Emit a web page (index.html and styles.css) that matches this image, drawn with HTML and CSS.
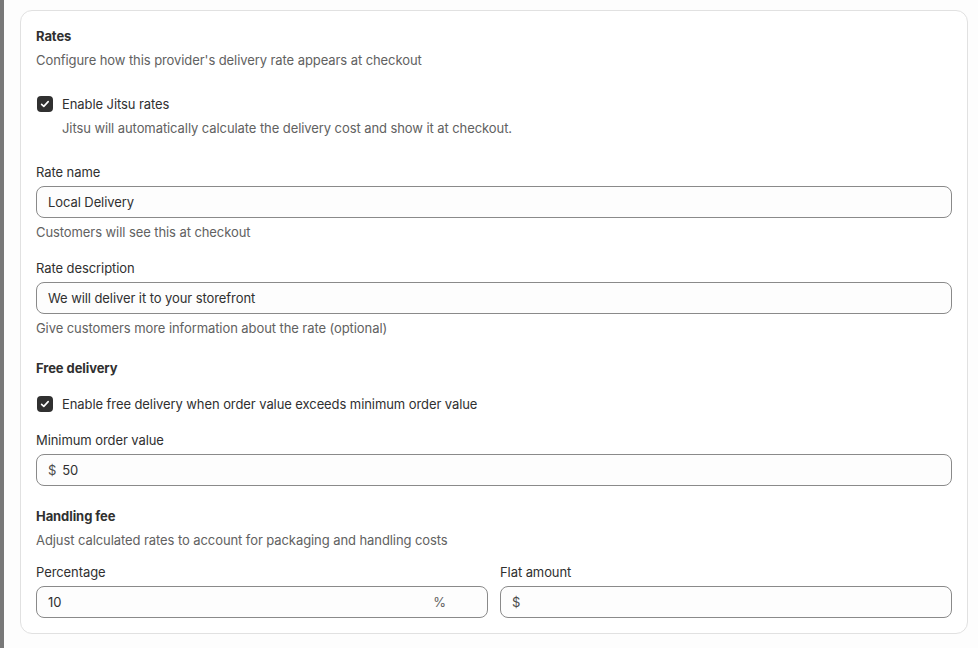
FILE: index.html
```html
<!DOCTYPE html>
<html lang="en">
<head>
  <meta charset="UTF-8">
  <title>Rates</title>
  <link rel="stylesheet" href="styles.css">
</head>
<body>
  <div class="page">
    <div class="rail"></div>

    <div class="card">
      <div class="head">
        <h2 class="title">Rates</h2>
        <p class="sub">Configure how this provider's delivery rate appears at checkout</p>
      </div>

      <div class="check-block gap-24">
        <label class="check">
          <span class="box">
            <svg viewBox="0 0 16 16" width="16" height="16"><path d="M4.6 8.3l2.2 2.1 4.4-4.8" fill="none" stroke="#fff" stroke-width="1.6" stroke-linecap="round" stroke-linejoin="round"/></svg>
          </span>
          <span>Enable Jitsu rates</span>
        </label>
        <p class="sub indent">Jitsu will automatically calculate the delivery cost and show it at checkout.</p>
      </div>

      <div class="field gap-24">
        <span class="label">Rate name</span>
        <div class="input"><span class="value">Local Delivery</span></div>
        <p class="sub">Customers will see this at checkout</p>
      </div>

      <div class="field gap-16">
        <span class="label">Rate description</span>
        <div class="input"><span class="value">We will deliver it to your storefront</span></div>
        <p class="sub">Give customers more information about the rate (optional)</p>
      </div>

      <h3 class="heading gap-20">Free delivery</h3>

      <label class="check gap-16">
        <span class="box">
          <svg viewBox="0 0 16 16" width="16" height="16"><path d="M4.6 8.3l2.2 2.1 4.4-4.8" fill="none" stroke="#fff" stroke-width="1.6" stroke-linecap="round" stroke-linejoin="round"/></svg>
        </span>
        <span>Enable free delivery when order value exceeds minimum order value</span>
      </label>

      <div class="field gap-16">
        <span class="label">Minimum order value</span>
        <div class="input"><span class="prefix">$</span><span class="value">50</span></div>
      </div>

      <div class="head gap-20">
        <h3 class="heading">Handling fee</h3>
        <p class="sub">Adjust calculated rates to account for packaging and handling costs</p>
      </div>

      <div class="row gap-12">
        <div class="field">
          <span class="label">Percentage</span>
          <div class="input"><span class="value grow">10</span><span class="suffix">%</span></div>
        </div>
        <div class="field">
          <span class="label">Flat amount</span>
          <div class="input"><span class="prefix">$</span><span class="value"></span></div>
        </div>
      </div>
    </div>
  </div>
</body>
</html>
```

FILE: styles.css
```css
* {
  box-sizing: border-box;
}

body {
  margin: 0;
  font-family: Inter, "Noto Sans", sans-serif;
  font-size: 13px;
  line-height: 20px;
  letter-spacing: -0.08px;
  color: #303030;
  background: #fdfdfd;
}

.page {
  display: flex;
  height: 648px;
}

.rail {
  width: 4px;
  flex: none;
  background: #787878;
}

.card {
  width: 948px;
  margin: 10px 0 0 16px;
  height: 624px;
  padding: 15px;
  background: #fff;
  border: 1px solid #e1e1e1;
  border-radius: 12px;
  display: flex;
  flex-direction: column;
}

.head {
  display: flex;
  flex-direction: column;
  gap: 4px;
}

.title,
.heading {
  margin: 0;
  font-size: 13px;
  font-weight: 650;
  line-height: 20px;
}

.sub {
  margin: 0;
  color: #616161;
}

.indent {
  margin: 4px 0 0 26px;
}

.gap-12 { margin-top: 12px; }
.gap-16 { margin-top: 16px; }
.gap-20 { margin-top: 20px; }
.gap-24 { margin-top: 24px; }

.check {
  display: flex;
  align-items: center;
  gap: 9px;
  padding-left: 1px;
}

.box {
  width: 16px;
  height: 16px;
  border-radius: 4px;
  background: #303030;
  display: flex;
}

.field {
  display: flex;
  flex-direction: column;
  gap: 4px;
}

.input {
  height: 32px;
  border: 1px solid #8a8a8a;
  border-radius: 8px;
  background: #fdfdfd;
  display: flex;
  align-items: center;
  padding: 0 11px;
}

.prefix {
  color: #4a4a4a;
  margin-right: 6px;
}

.grow {
  flex: 1;
}

.suffix {
  color: #616161;
  margin-right: 30px;
}

.row {
  display: grid;
  grid-template-columns: 1fr 1fr;
  gap: 12px;
}
```
